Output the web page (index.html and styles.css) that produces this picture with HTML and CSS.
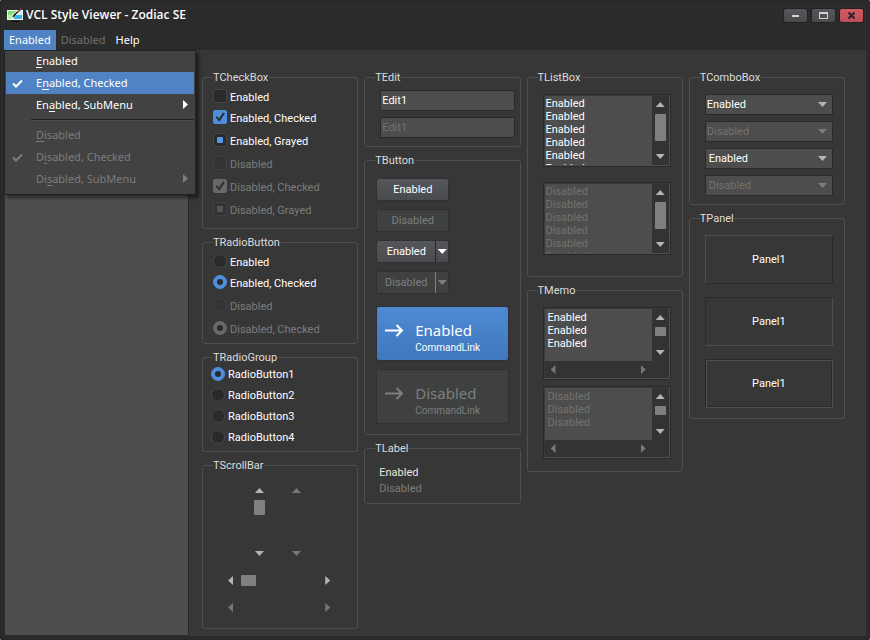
FILE: index.html
```html
<!DOCTYPE html>
<html lang="en">
<head>
<meta charset="utf-8">
<title>VCL Style Viewer - Zodiac SE</title>
<link rel="stylesheet" href="styles.css">
</head>
<body>
<div class="window">
  <header class="titlebar">
    <svg class="app-icon" width="17" height="15" viewBox="0 0 17 15" aria-hidden="true">
      <rect x="0" y="2" width="16" height="10" fill="#f4f4f4"/>
      <path d="M1 3h9L4 7H1z" fill="#7fe07a"/>
      <path d="M1 7h6l-2 4H1z" fill="#b9efb0"/>
      <path d="M8 7h7v4H7z" fill="#35b8ec"/>
      <path d="M11 3h4v4h-5z" fill="#cfeefa"/>
      <path d="M5 13h7v1H5z" fill="#0c0c0c"/>
      <path d="M14.500 .500 9 5.500" stroke="#7d3a34" stroke-width="1.600"/>
      <path d="M10 4.500 6.500 9 6 9l1-2.500z" fill="#27201f" stroke="#27201f"/>
    </svg>
    <h1 class="caption">VCL Style Viewer - Zodiac SE</h1>
    <button class="win-btn" aria-label="Minimize"><svg width="23" height="13"><path d="M8 6h7v2H8z" fill="#d2d2d2"/></svg></button>
    <button class="win-btn" aria-label="Maximize"><svg width="23" height="13"><path d="M7 3h9v7H7zM8 5v4h7V5z" fill="#d2d2d2" fill-rule="evenodd"/></svg></button>
    <button class="win-btn close" aria-label="Close"><svg width="23" height="13"><path d="M8.500 3.500l6 6M14.500 3.500l-6 6" stroke="#2b2226" stroke-width="2"/></svg></button>
  </header>

  <nav class="menubar">
    <button class="menu-head open">Enabled</button>
    <button class="menu-head" disabled>Disabled</button>
    <button class="menu-head">Help</button>
    <div class="dropdown" role="menu">
      <button class="item" role="menuitem"><u>E</u>nabled</button>
      <button class="item active" role="menuitem"><svg class="tick" width="11" height="9"><path d="M1 4.500 4 7.500 10 1.500" fill="none" stroke="currentColor" stroke-width="2"/></svg>E<u>n</u>abled, Checked</button>
      <button class="item" role="menuitem">En<u>a</u>bled, SubMenu<i class="tri right"></i></button>
      <hr class="sep">
      <button class="item" role="menuitem" disabled><u>D</u>isabled</button>
      <button class="item" role="menuitem" disabled><svg class="tick" width="11" height="9"><path d="M1 4.500 4 7.500 10 1.500" fill="none" stroke="currentColor" stroke-width="2"/></svg>D<u>i</u>sabled, Checked</button>
      <button class="item" role="menuitem" disabled>Di<u>s</u>abled, SubMenu<i class="tri right"></i></button>
    </div>
  </nav>

  <div class="client">
    <aside class="side"></aside>
    <main class="form">
      <div class="col">
        <fieldset class="options">
          <legend>TCheckBox</legend>
          <label class="opt"><input type="checkbox">Enabled</label>
          <label class="opt tight"><input type="checkbox" checked>Enabled, Checked</label>
          <label class="opt"><input type="checkbox" class="mixed">Enabled, Grayed</label>
          <label class="opt"><input type="checkbox" disabled>Disabled</label>
          <label class="opt"><input type="checkbox" checked disabled>Disabled, Checked</label>
          <label class="opt"><input type="checkbox" class="mixed" disabled>Disabled, Grayed</label>
        </fieldset>
        <fieldset class="radios">
          <legend>TRadioButton</legend>
          <label class="opt"><input type="radio" name="a">Enabled</label>
          <label class="opt tight"><input type="radio" name="a" checked>Enabled, Checked</label>
          <label class="opt"><input type="radio" name="b" disabled>Disabled</label>
          <label class="opt"><input type="radio" name="b" checked disabled>Disabled, Checked</label>
        </fieldset>
        <fieldset class="radio-group">
          <legend>TRadioGroup</legend>
          <label class="opt tight"><input type="radio" name="c" checked>RadioButton1</label>
          <label class="opt tight"><input type="radio" name="c">RadioButton2</label>
          <label class="opt tight"><input type="radio" name="c">RadioButton3</label>
          <label class="opt tight"><input type="radio" name="c">RadioButton4</label>
        </fieldset>
        <fieldset class="scrolls">
          <legend>TScrollBar</legend>
          <div class="verticals">
            <div class="bar vert"><button aria-label="Up"><i class="tri up"></i></button><span class="thumb"></span><button aria-label="Down"><i class="tri down"></i></button></div>
            <div class="bar vert"><button disabled aria-label="Up"><i class="tri up"></i></button><button disabled aria-label="Down"><i class="tri down"></i></button></div>
          </div>
          <div class="bar horz"><button aria-label="Left"><i class="tri left"></i></button><span class="thumb"></span><button aria-label="Right"><i class="tri right"></i></button></div>
          <div class="bar horz"><button disabled aria-label="Left"><i class="tri left"></i></button><button disabled aria-label="Right"><i class="tri right"></i></button></div>
        </fieldset>
      </div>

      <div class="col">
        <fieldset class="edits">
          <legend>TEdit</legend>
          <input class="field" type="text" value="Edit1" aria-label="Edit">
          <input class="field" type="text" value="Edit1" aria-label="Disabled edit" disabled>
        </fieldset>
        <fieldset class="buttons">
          <legend>TButton</legend>
          <button class="btn">Enabled</button>
          <button class="btn" disabled>Disabled</button>
          <button class="btn split"><span>Enabled</span><b><i class="tri down"></i></b></button>
          <button class="btn split" disabled><span>Disabled</span><b><i class="tri down"></i></b></button>
          <div class="links">
            <button class="cmd"><svg width="19" height="13"><path d="M0 6.500h17M11.500 1l5.500 5.500-5.500 5.500" fill="none" stroke="currentColor" stroke-width="2"/></svg><span><strong>Enabled</strong><small>CommandLink</small></span></button>
            <button class="cmd" disabled><svg width="19" height="13"><path d="M0 6.500h17M11.500 1l5.500 5.500-5.500 5.500" fill="none" stroke="currentColor" stroke-width="2"/></svg><span><strong>Disabled</strong><small>CommandLink</small></span></button>
          </div>
        </fieldset>
        <fieldset class="labels">
          <legend>TLabel</legend>
          <p>Enabled</p>
          <p class="off">Disabled</p>
        </fieldset>
      </div>

      <div class="col">
        <fieldset class="lists">
          <legend>TListBox</legend>
          <div class="listbox">
            <select multiple size="5" aria-label="List"><option>Enabled</option><option>Enabled</option><option>Enabled</option><option>Enabled</option><option>Enabled</option><option>Enabled</option><option>Enabled</option></select>
            <div class="bar vert"><button aria-label="Up"><i class="tri up"></i></button><span class="thumb"></span><button aria-label="Down"><i class="tri down"></i></button></div>
          </div>
          <div class="listbox">
            <select multiple size="5" disabled aria-label="Disabled list"><option>Disabled</option><option>Disabled</option><option>Disabled</option><option>Disabled</option><option>Disabled</option><option>Disabled</option><option>Disabled</option></select>
            <div class="bar vert"><button aria-label="Up"><i class="tri up"></i></button><span class="thumb"></span><button aria-label="Down"><i class="tri down"></i></button></div>
          </div>
        </fieldset>
        <fieldset class="memos">
          <legend>TMemo</legend>
          <div class="memo">
            <textarea aria-label="Memo">Enabled
Enabled
Enabled</textarea>
            <div class="bar vert"><button aria-label="Up"><i class="tri up"></i></button><span class="thumb"></span><button aria-label="Down"><i class="tri down"></i></button></div>
            <div class="bar horz"><button disabled aria-label="Left"><i class="tri left"></i></button><button disabled aria-label="Right"><i class="tri right"></i></button></div>
          </div>
          <div class="memo">
            <textarea disabled aria-label="Disabled memo">Disabled
Disabled
Disabled</textarea>
            <div class="bar vert"><button aria-label="Up"><i class="tri up"></i></button><span class="thumb"></span><button aria-label="Down"><i class="tri down"></i></button></div>
            <div class="bar horz"><button disabled aria-label="Left"><i class="tri left"></i></button><button disabled aria-label="Right"><i class="tri right"></i></button></div>
          </div>
        </fieldset>
      </div>

      <div class="col">
        <fieldset class="combos">
          <legend>TComboBox</legend>
          <div class="combo"><select aria-label="Combo 1"><option>Enabled</option></select><i class="tri down"></i></div>
          <div class="combo off"><select aria-label="Combo 2" disabled><option>Disabled</option></select><i class="tri down"></i></div>
          <div class="combo list"><select aria-label="Combo 3"><option>Enabled</option></select><i class="tri down"></i></div>
          <div class="combo list off"><select aria-label="Combo 4" disabled><option>Disabled</option></select><i class="tri down"></i></div>
        </fieldset>
        <fieldset class="panels">
          <legend>TPanel</legend>
          <div class="panel raised">Panel1</div>
          <div class="panel lowered">Panel1</div>
          <div class="panel double">Panel1</div>
        </fieldset>
      </div>
    </main>
  </div>
</div>
</body>
</html>
```
FILE: styles.css
```css
:root {
  --frame: #2b2b2b;
  --face: #373737;
  --field: #4d4d4d;
  --line: #4f4f4f;
  --dark: #2a2a2a;
  --blue: #4f83c4;
  --text: #fff;
  --off: #7c7c7c;
  --off-field: #727272;
  --ui: Roboto, "Liberation Sans", sans-serif;
  --menu: "Noto Sans", "Open Sans", sans-serif;
}

* { box-sizing: border-box; }

body {
  margin: 0;
  background: #fff;
  color: var(--text);
  font: 11px/14px var(--ui);
}

button, input, select, textarea {
  margin: 0;
  padding: 0;
  border: 0;
  background: none;
  color: inherit;
  font: inherit;
  outline: 0;
}

p { margin: 0; }

.window {
  display: flex;
  flex-direction: column;
  min-height: 100vh;
  padding: 0 4px 4px;
  border-radius: 2px;
  background: var(--frame);
  box-shadow: inset 0 0 0 1px #262626;
}

/* title bar */
.titlebar {
  display: flex;
  align-items: center;
  gap: 5px;
  height: 30px;
  padding: 0 3px;
}

.app-icon { margin-right: -3px; }

.caption {
  flex: 1;
  margin: 0;
  font: 600 12px/16px "Open Sans", "Noto Sans", sans-serif;
}

.win-btn {
  width: 23px;
  height: 13px;
  border-radius: 2px;
  background: linear-gradient(#56575a, #4a4b4d);
  box-shadow: 0 0 0 1px #222;
}

.win-btn svg { display: block; }
.close { background: linear-gradient(#cf5a62, #bd4f57); }

/* menu */
.menubar {
  position: relative;
  display: flex;
  height: 20px;
  font: 11px/20px var(--menu);
}

.menu-head { padding: 0 5px; }
.menu-head.open { background: var(--blue); }
.menu-head:disabled { color: #707070; }

.dropdown {
  position: absolute;
  z-index: 1;
  top: 100%;
  left: 0;
  width: 192px;
  padding: 0 2px 5px;
  background: #424242;
  box-shadow: inset 0 0 0 1px #222, 3px 3px 3px rgba(0, 0, 0, .45);
}

.item {
  position: relative;
  display: block;
  width: 100%;
  padding-left: 30px;
  line-height: 22px;
  text-align: left;
}

.item.active { background: var(--blue); }
.item:disabled { color: var(--off); }
.item u { text-underline-offset: 2px; }
.tick { position: absolute; left: 6px; top: 7px; }
.item .tri { position: absolute; right: 6px; top: 6px; }

.sep {
  height: 2px;
  margin: 3px 0 3px 25px;
  border: 0;
  border-top: 1px solid #222;
  border-bottom: 1px solid #4c4c4c;
}

/* client area */
.client {
  display: flex;
  flex: 1;
}

.side {
  width: 185px;
  border: 1px solid var(--dark);
  border-top: 0;
  background: var(--field);
}

.form {
  display: grid;
  flex: 1;
  grid-template-columns: repeat(4, minmax(0, 1fr));
  gap: 6px;
  align-items: start;
  padding: 20px 21px 6px 13px;
  background: var(--face);
}

.col {
  display: grid;
  gap: 6px;
}

fieldset {
  min-width: 0;
  margin: 0;
  padding: 0 10px;
  border: 1px solid var(--line);
  border-radius: 3px;
}

legend {
  height: 14px;
  padding: 0 1px 0 0;
  line-height: 16px;
  color: #dcdcdc;
}

/* check boxes and radio buttons */
.options { padding-top: 5px; padding-bottom: 12px; }
.radios { padding-top: 5px; padding-bottom: 8px; }
.radio-group { padding: 3px 8px 7px; }
.radio-group legend { margin-left: 2px; }

.opt {
  display: flex;
  align-items: center;
  gap: 3px;
  height: 14px;
  margin-top: 9px;
  line-height: 16px;
}

.options .opt, .radios .opt { line-height: 18px; }
.opt.tight { margin-top: 7px; }
legend + .opt, legend + .opt.tight { margin-top: 0; }

.opt:has(:disabled) { color: var(--off); }

.opt input {
  display: grid;
  place-items: center;
  width: 14px;
  height: 14px;
  border: 1px solid #464646;
  border-radius: 2px;
  background: #2a2a2a;
  appearance: none;
}

.opt { align-items: flex-start; }
.opt input:disabled { border-color: #404040; background: #333; }
.opt input[type="radio"] { border-radius: 50%; }

.opt input:checked { border-color: #4f8edc; background: #4f8edc; }
.opt input:checked:disabled { border-color: #686868; background: #686868; }

.opt input[type="checkbox"]:checked::before {
  content: "";
  width: 10px;
  height: 10px;
  background: #2d2f33;
  clip-path: polygon(5% 52%, 22% 42%, 40% 65%, 80% 5%, 98% 14%, 44% 98%);
}

.opt input.mixed::before {
  content: "";
  width: 6px;
  height: 6px;
  border-radius: 1px;
  background: #5598e8;
}

.opt input.mixed:disabled::before { background: #555; }

.opt input[type="radio"]:checked::before {
  content: "";
  width: 6px;
  height: 6px;
  border-radius: 50%;
  background: #2a2a2a;
}

/* arrows */
.tri {
  display: block;
  width: 9px;
  height: 5px;
  background: currentColor;
}

.tri.up { clip-path: polygon(50% 0, 100% 100%, 0 100%); }
.tri.down { clip-path: polygon(0 0, 100% 0, 50% 100%); }
.tri.left, .tri.right { width: 5px; height: 9px; }
.tri.left { clip-path: polygon(0 50%, 100% 0, 100% 100%); }
.tri.right { clip-path: polygon(0 0, 100% 50%, 0 100%); }

/* scroll bars */
.bar { display: flex; color: #b4b4b4; }
.bar.vert { flex-direction: column; width: 17px; }
.bar.horz { height: 17px; }

.bar button {
  display: grid;
  flex: none;
  place-items: center;
  width: 17px;
  height: 17px;
}

.bar button:last-child { margin-top: auto; }
.bar.horz button:last-child { margin-top: 0; margin-left: auto; }
.bar button:disabled { color: #777; }

.thumb {
  width: 11px;
  height: 15px;
  margin: 1px 3px;
  border-radius: 1px;
  background: #808080;
}

.horz .thumb { width: 15px; height: 11px; margin: 3px 2px; }

.scrolls { padding: 10px 21px 12px 19px; }
.scrolls legend { margin-left: -9px; }
.scrolls .horz { margin-top: 10px; }

.verticals {
  display: flex;
  gap: 20px;
  height: 80px;
  padding-left: 29px;
}

/* text boxes */
.edits { padding: 6px 5px 8px 10px; }

.field {
  display: block;
  width: calc(100% - 5px);
  height: 21px;
  margin-left: 5px;
  padding: 0 1px;
  border: 1px solid var(--dark);
  background: var(--field);
}

.field + .field { margin-top: 6px; }
.field:disabled { color: var(--off-field); }

/* buttons */
.buttons { padding: 12px 12px 11px; }
.buttons legend { margin-left: -2px; }

.btn {
  display: block;
  width: 71px;
  height: 21px;
  margin-bottom: 10px;
  padding-top: 1px;
  border-radius: 2px;
  background: linear-gradient(#54565a, #4a4b4e);
  box-shadow: 0 0 0 1px #313131;
}

.btn:disabled, .cmd:disabled { background: #3f4140; color: #7c7e80; }

.split { display: flex; align-items: stretch; padding-top: 0; line-height: 22px; }
.split span { flex: 1; }
.split b { display: grid; place-items: center; width: 13px; border-left: 1px solid #262626; }
.split:disabled b { border-color: #7c7e80; }

.links { display: grid; gap: 10px; padding-top: 4px; }

.cmd {
  display: flex;
  gap: 11px;
  height: 53px;
  padding: 13px 8px 0;
  border-radius: 2px;
  background: linear-gradient(#4e8ad4, #4077bd);
  box-shadow: 0 0 0 1px #313131;
  text-align: left;
}

.cmd svg { flex: none; margin-top: 4px; }
.cmd strong { display: block; font: 15px/20px var(--menu); }
.cmd small { display: block; font: 10px/16px var(--ui); }

/* labels */
.labels { padding: 10px 14px 6px; }
.labels legend { margin-left: -4px; }
.labels p { line-height: 16px; color: #e8e8dc; }
.labels p.off { color: var(--off); }

/* list boxes */
.lists { padding: 10px 11px 21px 15px; }
.lists legend, .memos legend, .combos legend, .panels legend { margin-left: -5px; }

.listbox, .memo {
  display: grid;
  grid-template-columns: minmax(0, 1fr) 17px;
  padding: 1px;
  border: 1px solid var(--dark);
  background: #333;
  box-shadow: inset -1px -1px 0 var(--line), inset 1px 1px 0 #3a3a3a;
}

.listbox { height: 73px; }
.listbox + .listbox { margin-top: 15px; }

.listbox select {
  width: 100%;
  height: 69px;
  padding-top: 1px;
  border-radius: 0;
  background: var(--field);
  overflow: hidden;
  scrollbar-width: none;
}

.listbox option {
  min-height: 13px;
  padding: 0 1px;
  line-height: 13px;
}

.listbox select:disabled, .listbox select:disabled option { color: var(--off-field); opacity: 1; }
.listbox .thumb { height: 27px; }

/* memos */
.memos { padding: 10px 11px 12px 15px; }
.memo { grid-template-rows: 52px 17px; }
.memo + .memo { margin-top: 6px; }

.memo textarea {
  height: 52px;
  padding: 2px 3px;
  background: var(--field);
  line-height: 13px;
  overflow: hidden;
  resize: none;
}

.memo textarea:disabled { color: var(--off-field); }
.memo .thumb { height: 9px; }

/* combo boxes */
.combos { padding: 10px 11px 8px 15px; }

.combo {
  display: grid;
  align-items: center;
  border: 1px solid var(--dark);
  background: var(--field);
  color: #b4b4b4;
}

.combo + .combo { margin-top: 6px; }
.combo > * { grid-area: 1 / 1; }

.combo select {
  width: 100%;
  height: 19px;
  padding: 0 1px;
  color: var(--text);
  appearance: none;
  opacity: 1;
}

.combo.list select { padding-left: 3px; }
.combo .tri { justify-self: end; margin-right: 5px; pointer-events: none; }
.combo.off { color: #7c7c7c; }
.combo.off select { color: var(--off-field); }

/* panels */
.panels { padding: 10px 11px 10px 15px; }

.panel {
  display: grid;
  place-items: center;
  height: 49px;
  padding-top: 1px;
  border: 1px solid;
}

.panel + .panel { margin-top: 13px; }
.raised { border-color: var(--line) var(--dark) var(--dark) var(--line); }
.lowered { border-color: var(--dark) var(--line) var(--line) var(--dark); }

.double {
  border-color: var(--dark) var(--line) var(--line) var(--dark);
  box-shadow: inset 1px 1px 0 var(--line), inset -1px -1px 0 var(--dark);
}
```
